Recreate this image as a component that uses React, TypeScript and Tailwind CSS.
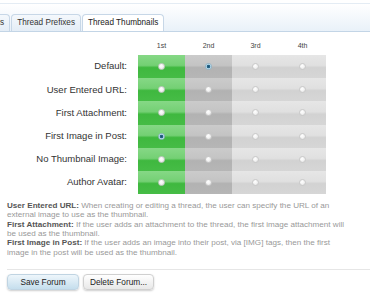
const rows = [
  { label: 'Default:', checked: 1 },
  { label: 'User Entered URL:', checked: -1 },
  { label: 'First Attachment:', checked: -1 },
  { label: 'First Image in Post:', checked: 0 },
  { label: 'No Thumbnail Image:', checked: -1 },
  { label: 'Author Avatar:', checked: -1 },
]

const cols = ['1st', '2nd', '3rd', '4th']

const cellBg = [
  'bg-[linear-gradient(#86d886_0%,#74d074_45%,#3fb83f_55%,#46bc46_100%)]',
  'bg-[linear-gradient(#cbcbcb_0%,#c4c4c4_45%,#b2b2b2_55%,#b6b6b6_100%)]',
  'bg-[linear-gradient(#e6e6e6_0%,#e0e0e0_45%,#d2d2d2_55%,#d6d6d6_100%)]',
  'bg-[linear-gradient(#e6e6e6_0%,#e0e0e0_45%,#d2d2d2_55%,#d6d6d6_100%)]',
]

const Radio = ({ on }: { on: boolean }) =>
  on ? (
    <span className="w-[7px] h-[7px] rounded-full bg-[radial-gradient(circle,#1d4f6e_0%,#2a6b8f_45%,#bfe0f0_60%,#dff0f8_100%)] border border-[#8fb4c8]" />
  ) : (
    <span className="w-[7px] h-[7px] rounded-full bg-[radial-gradient(circle_at_40%_35%,#ffffff_0%,#f2f2f2_50%,#d8d8d8_100%)] border border-[#c9c9c9]" />
  )

export default function App() {
  return (
    <div className="w-[379px] h-[300px] bg-white overflow-hidden font-['Liberation_Sans',Arial,sans-serif] text-[#222]">
      {/* tabs */}
      <div className="mt-[3px] w-[370px] h-[29px] border-t border-b border-t-[#e4ecf4] border-b-[#c3d5e6] bg-[linear-gradient(#ffffff,#e9f1f9)] flex items-end overflow-hidden">
        <div className="-ml-[30px] h-[17px] px-[5px] flex items-center text-[8.2px] text-[#333] bg-[linear-gradient(#f4f8fc,#e4edf6)] border border-b-0 border-[#c7d7e7] rounded-t-[4px]">
          Options
        </div>
        <div className="ml-[1px] h-[17px] px-[5px] flex items-center text-[8.2px] text-[#333] bg-[linear-gradient(#f4f8fc,#e4edf6)] border border-b-0 border-[#c7d7e7] rounded-t-[4px]">
          Thread Prefixes
        </div>
        <div className="ml-[1px] h-[18px] -mb-px px-[5px] flex items-center text-[8.2px] text-[#222] bg-white border border-b-0 border-[#c7d7e7] rounded-t-[4px]">
          Thread Thumbnails
        </div>
      </div>

      {/* grid */}
      <div className="mt-[10px] flex flex-col">
        <div className="flex h-[13px] items-start">
          <div className="w-[138px]" />
          {cols.map((c) => (
            <div key={c} className="w-[47px] text-center text-[7px] leading-[8px] text-[#444]">
              {c}
            </div>
          ))}
        </div>
        {rows.map((r) => (
          <div key={r.label} className="flex h-[23.2px]">
            <div className="w-[138px] pr-[11px] flex items-center justify-end text-[9.5px] text-[#333]">
              {r.label}
            </div>
            {cols.map((c, i) => (
              <div key={c} className={`w-[47px] flex items-center justify-center ${cellBg[i]}`}>
                <Radio on={r.checked === i} />
              </div>
            ))}
          </div>
        ))}
      </div>

      {/* explanation */}
      <div className="mt-[7px] pl-[7px] w-[353px] text-[8.1px] leading-[9.3px] text-[#999]">
        <p>
          <b className="text-[#555]">User Entered URL:</b> When creating or editing a thread, the user can specify the URL of an external image to use as the thumbnail.
        </p>
        <p>
          <b className="text-[#555]">First Attachment:</b> If the user adds an attachment to the thread, the first image attachment will be used as the thumbnail.
        </p>
        <p>
          <b className="text-[#555]">First Image in Post:</b> If the user adds an image into their post, via [IMG] tags, then the first image in the post will be used as the thumbnail.
        </p>
      </div>

      <div className="ml-[7px] w-[363px] mt-[12px] border-t border-[#e6e6e6]" />

      {/* buttons */}
      <div className="flex gap-[4px] px-[7px] mt-[4px]">
        <button className="w-[72px] h-[16px] rounded-[4px] text-[8.3px] text-[#222] bg-[linear-gradient(#eef6fb,#c5deed)] border border-[#c0d4e2] shadow-[0_1px_2px_rgba(0,0,0,0.2)]">
          Save Forum
        </button>
        <button className="w-[71px] h-[16px] rounded-[4px] text-[8.3px] text-[#222] bg-[linear-gradient(#ffffff,#e8e8e8)] border border-[#d0d0d0] shadow-[0_1px_2px_rgba(0,0,0,0.2)]">
          Delete Forum...
        </button>
      </div>
    </div>
  )
}
